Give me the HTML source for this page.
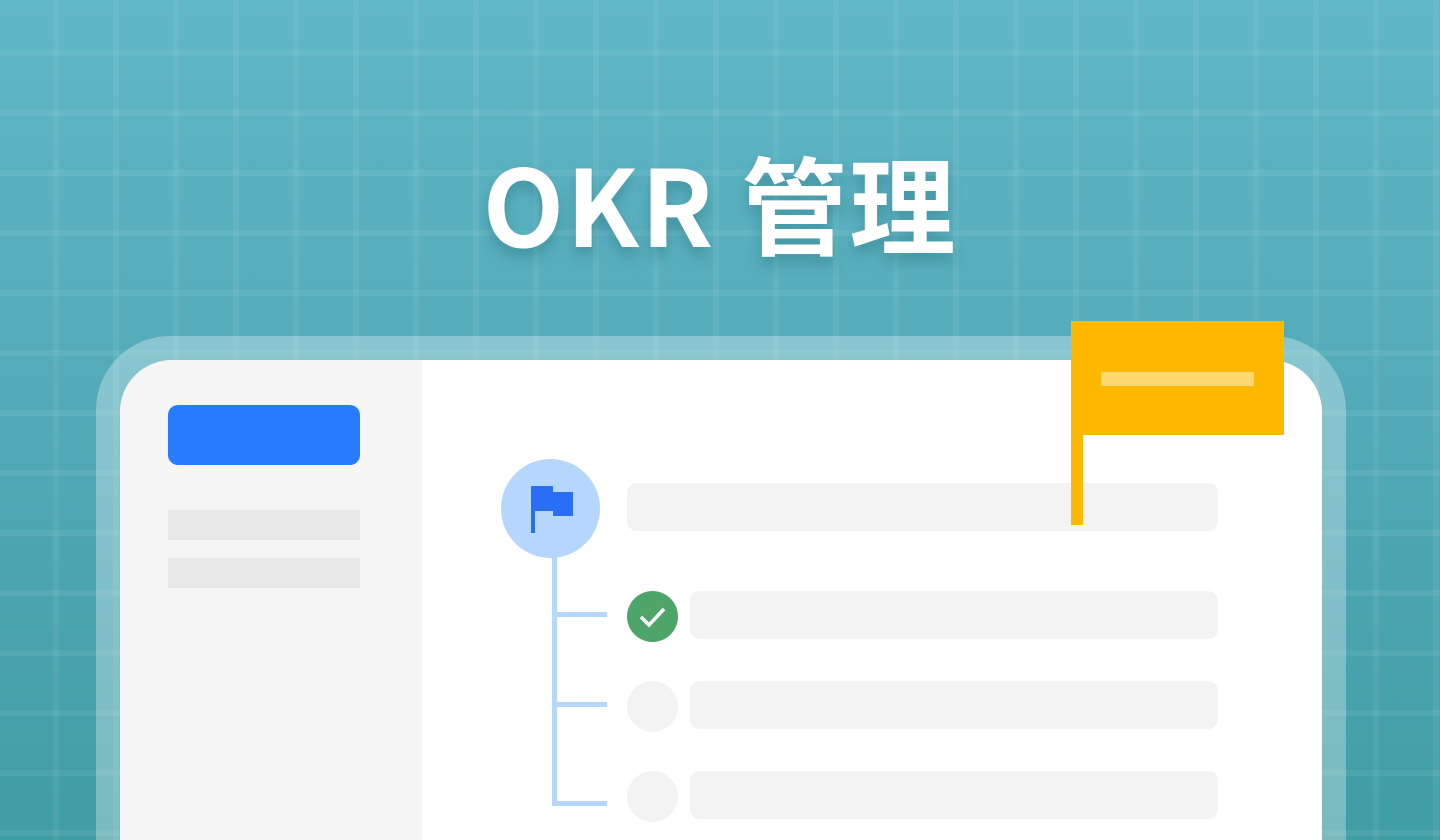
<!DOCTYPE html>
<html style="width:1440px;height:840px;overflow:hidden"><head><meta charset="utf-8"><style>
*{margin:0;padding:0;box-sizing:border-box}
body{width:1440px;height:840px;overflow:hidden;position:relative;background:linear-gradient(180deg,#60b7c7 0%,#52aab8 50%,#3f9da4 100%);font-family:"Liberation Sans","Noto Sans CJK SC",sans-serif}
.grid{position:absolute;left:0;top:0;width:1440px;height:840px;background-image:linear-gradient(90deg,rgba(255,255,255,0.06) 6px,transparent 6px),linear-gradient(0deg,rgba(255,255,255,0.06) 6px,transparent 6px);background-size:60px 60px;background-position:53px 0,0 56px}
.title{position:absolute;left:0;width:1440px;top:136px;text-align:center;color:#fff;font-family:"Noto Sans CJK SC",sans-serif;font-weight:700;font-size:106px;line-height:130px;letter-spacing:2px;text-shadow:0 8px 14px rgba(0,60,70,0.25)}
.frame{position:absolute;left:96px;top:336px;width:1250px;height:504px;border-radius:74px 74px 0 0;background:rgba(255,255,255,0.3)}
.card{position:absolute;left:120px;top:360px;width:1202px;height:480px;border-radius:52px 52px 0 0;background:#fff;overflow:hidden}
.side{position:absolute;left:0;top:0;width:302px;height:100%;background:#f5f5f5}
.abs{position:absolute}
</style></head><body>
<div class="grid"></div>
<div class="title">OKR 管理</div>
<div class="frame"></div>
<div class="card"><div class="side"></div></div>
<div class="abs" style="left:168px;top:405px;width:192px;height:60px;border-radius:10px;background:#2a7cff"></div>
<div class="abs" style="left:168px;top:510px;width:192px;height:30px;background:#e8e8e8"></div>
<div class="abs" style="left:168px;top:558px;width:192px;height:30px;background:#e8e8e8"></div>
<div class="abs" style="left:501px;top:459px;width:99px;height:99px;border-radius:50%;background:#b6d6fc"></div>
<svg class="abs" style="left:530px;top:485px" width="44" height="48" viewBox="0 0 44 48"><path d="M1 1h22v6h20v24H23v-5H5v22H1z" fill="#2a6ef5"/></svg>
<div class="abs" style="left:552px;top:556px;width:5px;height:250px;background:#b6d6fc"></div>
<div class="abs" style="left:552px;top:612px;width:55px;height:5px;background:#b6d6fc"></div>
<div class="abs" style="left:552px;top:702px;width:55px;height:5px;background:#b6d6fc"></div>
<div class="abs" style="left:552px;top:801px;width:55px;height:5px;background:#b6d6fc"></div>
<div class="abs" style="left:627px;top:483px;width:591px;height:48px;border-radius:10px;background:#f3f3f3"></div>
<div class="abs" style="left:627px;top:591px;width:51px;height:51px;border-radius:50%;background:#4ea56a"></div>
<svg class="abs" style="left:627px;top:591px" width="51" height="51"><path d="M14 26l8 8 15-16" stroke="#fff" stroke-width="3.5" fill="none"/></svg>
<div class="abs" style="left:690px;top:591px;width:528px;height:48px;border-radius:10px;background:#f3f3f3"></div>
<div class="abs" style="left:627px;top:681px;width:51px;height:51px;border-radius:50%;background:#f3f3f3"></div>
<div class="abs" style="left:690px;top:681px;width:528px;height:48px;border-radius:10px;background:#f3f3f3"></div>
<div class="abs" style="left:627px;top:771px;width:51px;height:51px;border-radius:50%;background:#f3f3f3"></div>
<div class="abs" style="left:690px;top:771px;width:528px;height:48px;border-radius:10px;background:#f3f3f3"></div>
<div class="abs" style="left:1071px;top:321px;width:213px;height:114px;background:#ffb800"></div>
<div class="abs" style="left:1071px;top:430px;width:12px;height:95px;background:#ffb800"></div>
<div class="abs" style="left:1101px;top:372px;width:153px;height:14px;background:#ffd873"></div>
</body></html>
